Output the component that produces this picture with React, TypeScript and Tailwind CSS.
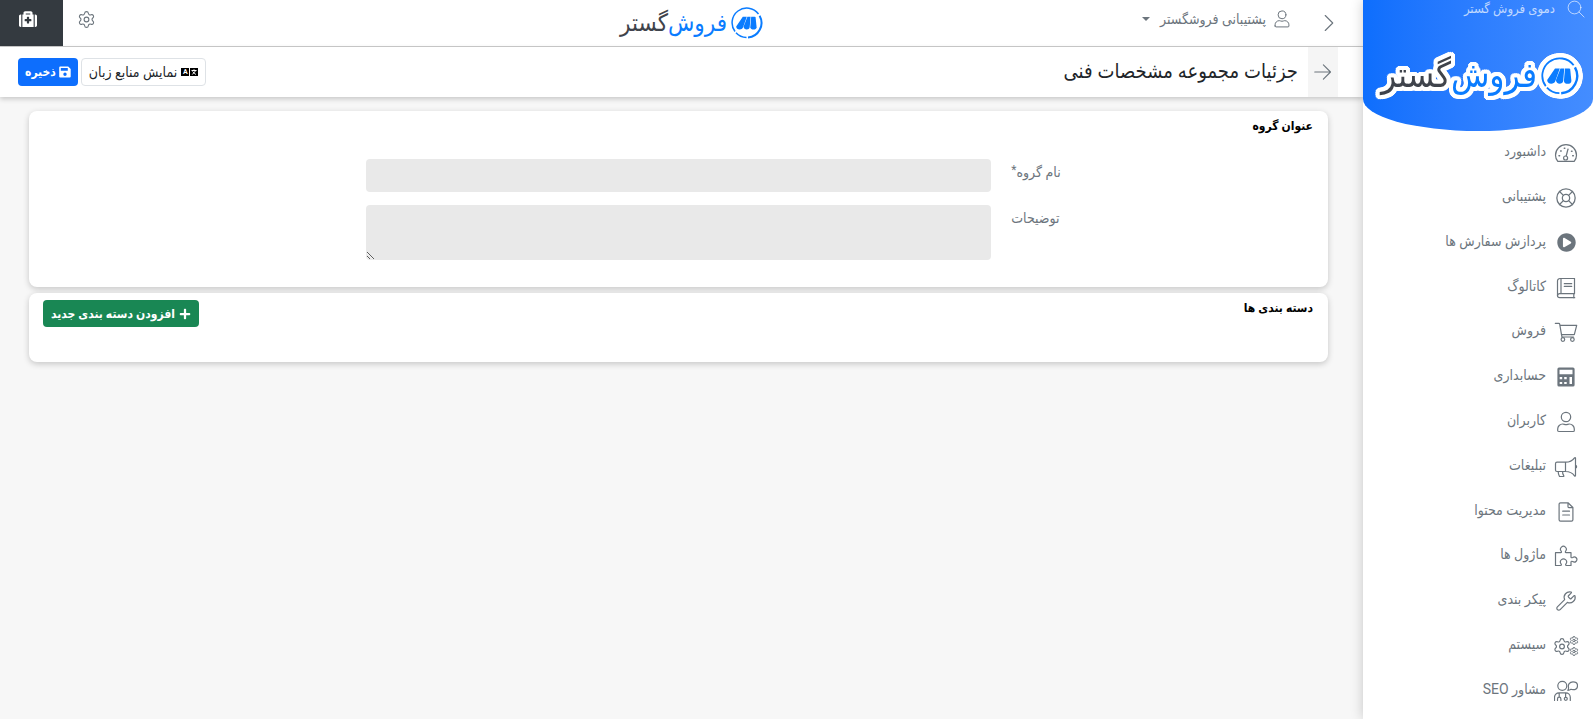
import React from "react";
import { LifeBuoy, Settings, Wrench } from "lucide-react";
import { FaMedkit, FaPlayCircle, FaPlus } from "react-icons/fa";

interface IconProps {
  className?: string;
}

interface LineIconProps extends IconProps {
  children: React.ReactNode;
}

const LineIcon: React.FC<LineIconProps> = ({ className = "size-6", children }) => (
  <svg
    viewBox="0 0 24 24"
    fill="none"
    stroke="currentColor"
    strokeWidth={1.2}
    strokeLinecap="round"
    strokeLinejoin="round"
    className={className}
    aria-hidden="true"
  >
    {children}
  </svg>
);

const GaugeIcon = () => (
  <LineIcon>
    <path d="M3.8 20.4h16.4c1.6-2 2.3-3.8 2.3-6.2a10.5 10.5 0 0 0-21 0c0 2.4.7 4.2 2.3 6.2z" />
    <circle cx="11.6" cy="17" r="2" />
    <path d="m12.2 15 1.8-7" />
    <path d="M5 14.8h.6M6.6 10h.6M10.3 7.2h.5M17.5 10.2h.5M18.700 14.800h.6" strokeWidth={1.5} />
  </LineIcon>
);

const BookIcon = () => (
  <LineIcon>
    <path d="M20.5 2.5H6A2.5 2.5 0 0 0 3.5 5v14.5A2.2 2.2 0 0 0 5.7 21.7h15" />
    <path d="M20.5 2.5v15.2H5.7a2 2 0 0 0-2.2 2M7 2.5v15.2M19.8 17.7v4M10.3 7.700h7.4M10.3 10.4h7.4" />
  </LineIcon>
);

const CartIcon = () => (
  <LineIcon>
    <path d="M1.3 3.3h3.5c.6 0 .8.3.9.9l1.8 10.500h12.8l2.4-9.400H6" />
    <path d="M7.5 14.7 8 17h11.5" />
    <circle cx="8.9" cy="19.5" r="1.8" />
    <circle cx="18.4" cy="19.5" r="1.8" />
  </LineIcon>
);

const CalculatorIcon = () => (
  <svg viewBox="0 0 24 24" fill="currentColor" fillRule="evenodd" className="size-6" aria-hidden="true">
    <path d="M5 2.5h14A1.6 1.6 0 0 1 20.6 4v16a1.6 1.6 0 0 1-1.6 1.6H5A1.6 1.6 0 0 1 3.4 20V4A1.6 1.6 0 0 1 5 2.5zM5.5 4.7v4.6h13V4.7zM5.7 12v2.2h2.500V12zM10.2 12v2.200h2.500V12zM5.7 16.900v2.200h2.500v-2.200zM10.2 16.900v2.200h2.500v-2.200zM15.5 12v7.100H18V12z" />
  </svg>
);

const UserIcon: React.FC<IconProps> = ({ className }) => (
  <LineIcon className={className}>
    <circle cx="12" cy="7" r="4.7" />
    <path d="M3.7 20.4V19a5 5 0 0 1 5-5c1.2 0 1.9.7 3.3.7s2.1-.7 3.3-.7a5 5 0 0 1 5 5v1.4a1.1 1.1 0 0 1-1.1 1.1H4.8a1.1 1.1 0 0 1-1.1-1.1z" />
  </LineIcon>
);

const BullhornIcon = () => (
  <LineIcon>
    <path d="M11.5 7.2H3A1.5 1.5 0 0 0 1.5 8.7V15A1.5 1.5 0 0 0 3 16.500h8.500zM11.5 7.2c4 0 7.2-1.8 9-4.4.4-.5 1-.4 1 .3v17.5c0 .7-.6.8-1 .3-1.8-2.6-5-4.4-9-4.4" />
    <path d="M4.2 16.5c0 1.9.5 3.5 1.3 5h3.8c.7 0 .7-.6.3-1.2a6 6 0 0 1-1-3.800M21.7 10.400c1.2.3 1.2 2.200 0 2.500" />
  </LineIcon>
);

const FileIcon = () => (
  <LineIcon>
    <path d="M14 2.8H6.5A1.4 1.4 0 0 0 5.1 4.2v15.6a1.4 1.4 0 0 0 1.4 1.4h11a1.4 1.4 0 0 0 1.4-1.4V7.5zM14 2.8v4a.8.8 0 0 0 .8.8h4M8.7 11.2h6.8M8.7 15h6.8" />
  </LineIcon>
);

const PuzzleIcon = () => (
  <LineIcon>
    <path d="M1.5 8.7h5.2c1 0 .9-.9.4-1.7a2.9 2.9 0 1 1 4.6 0c-.5.8-.6 1.7.4 1.7H17v4.2c0 1 .9 1 1.7.5a2.6 2.6 0 1 1 0 4.2c-.8-.5-1.7-.5-1.7.5v3.4h-4.5c-1.2 0-1-1-.4-1.8a3.1 3.1 0 1 0-5.2 0c.6.8.8 1.8-.4 1.8h-5z" />
  </LineIcon>
);

const CogsIcon = () => (
  <svg viewBox="0 0 24 24" className="size-6 overflow-visible" aria-hidden="true">
    <Settings x={-1.5} y={3} size={19} strokeWidth={1.5} />
    <Settings x={15} y={1.5} size={10} strokeWidth={2.4} />
    <Settings x={15} y={12.5} size={10} strokeWidth={2.4} />
  </svg>
);

const AdvisorIcon = () => (
  <LineIcon>
    <circle cx="8.3" cy="6.8" r="4.5" />
    <path d="M14.600 8.800c-.9-3.100.9-6 4.400-6 2.7 0 4.5 1.700 4.500 3.900s-1.800 4-4.500 4c-.8 0-1.400-.1-2-.4-.9.700-1.900 1-3.200 1 .5-.6.800-1.500.8-2.500z" />
    <path d="M.5 21.5v-3.200a4.500 4.500 0 0 1 4.500-4.500h6.800a4.500 4.500 0 0 1 4.500 4.500v3.200M5.200 14v4.200M11.600 14v4.200M3.500 21.500v-1.600a1.700 1.700 0 0 1 3.400 0v1.600" />
    <circle cx="11.8" cy="19.800" r="1.500" />
  </LineIcon>
);

const SaveIcon = () => (
  <svg viewBox="0 0 12 12" fill="currentColor" fillRule="evenodd" className="size-3" aria-hidden="true">
    <path d="M1.2.5h8L11.7 3v7.500a1 1 0 0 1-1 1H1.200a1 1 0 0 1-1-1v-9a1 1 0 0 1 1-1zM1.800 2v2.800h7V2zM6 6.600a1.700 1.700 0 1 0 0 3.400 1.700 1.700 0 0 0 0-3.400z" />
  </svg>
);

// two dark tiles: a latin letter and a translated glyph
const LanguageIcon = () => (
  <span className="flex gap-px" aria-hidden="true" dir="ltr">
    <span className="flex size-2 items-center justify-center bg-black text-[7px] font-bold leading-none text-white">
      A
    </span>
    <span className="flex size-2 items-center justify-center bg-black text-white">
      <svg viewBox="0 0 8 8" fill="none" stroke="currentColor" className="size-2">
        <path d="M1.500 2.500h5M4 1.300v1.200M2.300 6.500 5.700 2.700M2.500 3.500l3.400 3" />
      </svg>
    </span>
  </span>
);

interface LogoProps {
  outlined?: boolean;
}

const Emblem: React.FC<LogoProps> = ({ outlined }) => (
  <svg viewBox="0 0 32 32" className={outlined ? "size-[38px]" : "size-8"} aria-hidden="true">
    {outlined && <circle cx="16" cy="16" r="15.500" fill="#fff" />}
    <g fill="none" stroke="#0a7cff" strokeWidth="2">
      <path d="M4 24.500A14.600 14.600 0 0 1 27.500 7" strokeWidth="1.500" />
      <path d="M28.600 8.800A14.600 14.600 0 0 1 17 30.500" />
      <path d="M15.500 30.500A14.600 14.600 0 0 1 5 25.800" strokeWidth="1.500" />
    </g>
    <g fill="#0a7cff">
      <path d="M11.800 9.700h4l-3.700 10.500c-1 3.200-7 3-6.900-.8z" />
      <path d="M16.400 9.700h3.200l-.9 10.500c-.6 3.200-6.200 3-6.100-.8z" />
      <path d="M20.200 9.700h3.500c.5 0 .8.300.9.800l1 9.700c0 3.200-6.200 3.200-6.300 0z" />
    </g>
  </svg>
);

const Logo: React.FC<LogoProps> = ({ outlined }) => (
  <a
    href="#"
    className={
      outlined
        ? "flex items-center gap-1 text-[35px] leading-10 [filter:drop-shadow(2px_0_0_#fff)_drop-shadow(-2px_0_0_#fff)_drop-shadow(0_2px_0_#fff)_drop-shadow(0_-2px_0_#fff)_drop-shadow(1px_1px_0_#fff)_drop-shadow(-1px_-1px_0_#fff)_drop-shadow(1px_-1px_0_#fff)_drop-shadow(-1px_1px_0_#fff)]"
        : "flex items-center gap-1 text-2xl leading-8"
    }
  >
    <Emblem outlined={outlined} />
    <span className="flex">
      <span className="block text-[#0a7cff]">فروش</span>
      <span className="block text-[#3f434b]">گستر</span>
    </span>
  </a>
);

const menuItems = [
  { text: "داشبورد", icon: <GaugeIcon /> },
  { text: "پشتیبانی", icon: <LifeBuoy size={22} strokeWidth={1.4} /> },
  { text: "پردازش سفارش ها", icon: <FaPlayCircle size={19} /> },
  { text: "کاتالوگ", icon: <BookIcon /> },
  { text: "فروش", icon: <CartIcon /> },
  { text: "حسابداری", icon: <CalculatorIcon /> },
  { text: "کاربران", icon: <UserIcon /> },
  { text: "تبلیغات", icon: <BullhornIcon /> },
  { text: "مدیریت محتوا", icon: <FileIcon /> },
  { text: "ماژول ها", icon: <PuzzleIcon /> },
  { text: "پیکر بندی", icon: <Wrench size={22} strokeWidth={1.3} /> },
  { text: "سیستم", icon: <CogsIcon /> },
  { text: "مشاور SEO", icon: <AdvisorIcon /> },
];

const Sidebar = () => (
  <aside className="z-10 flex w-[230px] shrink-0 flex-col bg-white shadow-[0_0_12px_rgba(0,0,0,0.2)]">
    <div className="flex h-[131px] flex-col rounded-b-[50%_32px] bg-linear-to-l from-[#448dff] to-[#0d6efd]">
      <div className="flex items-center gap-3 ps-2 text-white/70">
        <LineIcon className="size-[18px]">
          <circle cx="10" cy="10" r="8.5" />
          <path d="m16.2 16.2 6.5 6.5" />
        </LineIcon>
        <input
          type="search"
          aria-label="جستجو"
          defaultValue="دموی فروش گستر"
          className="w-40 bg-transparent text-[13px] leading-[18px] outline-none"
        />
      </div>
      <div className="ps-[14px] pt-[38px]">
        <Logo outlined />
      </div>
    </div>
    <nav className="flex flex-1 flex-col pb-1.5">
      <ul className="flex flex-1 flex-col">
        {menuItems.map((item) => (
          <li key={item.text} className="flex min-h-10 flex-1">
            <a href="#" className="flex flex-1 items-center gap-2 ps-[15px]">
              <span className="flex w-6 justify-center">{item.icon}</span>
              <span className="pb-1 text-sm leading-5">{item.text}</span>
            </a>
          </li>
        ))}
      </ul>
    </nav>
  </aside>
);

const TopBar = () => (
  <header className="grid h-[47px] grid-cols-[1fr_auto_1fr] items-stretch border-b border-[#ccc] bg-white">
    <div className="flex items-center gap-7 ps-[25px]">
      <button type="button" aria-label="منو">
        <LineIcon className="size-[18px]">
          <path d="m7 2 10 10L7 22" strokeWidth={1.5} />
        </LineIcon>
      </button>
      <button type="button" className="flex items-center gap-1.5 pb-2 text-sm leading-5">
        <UserIcon className="size-5" />
        پشتیبانی فروشگستر
        <span className="ms-1 border-x-4 border-t-4 border-x-transparent border-t-current" />
      </button>
    </div>
    <div className="flex items-center pe-5">
      <Logo />
    </div>
    <div className="flex items-stretch justify-end gap-3.5">
      <button type="button" aria-label="تنظیمات" className="pb-2">
        <Settings size={19} strokeWidth={1.4} />
      </button>
      <button
        type="button"
        aria-label="پشتیبانی"
        className="flex w-[63px] items-center justify-center bg-[#343a40] ps-2 pb-2 text-white"
      >
        <FaMedkit size={18} />
      </button>
    </div>
  </header>
);

const TitleBar = () => (
  <div className="z-[1] flex h-[50px] items-center bg-white ps-[25px] pe-[18px] shadow-[0_2px_5px_rgba(0,0,0,0.2)]">
    <a
      href="#"
      aria-label="بازگشت"
      className="flex w-[30px] items-center justify-center self-stretch bg-[#f5f5f5]"
    >
      <LineIcon className="size-[18px]">
        <path d="M1 12h21M12.5 2.5 22 12l-9.5 9.5" strokeWidth={1.5} />
      </LineIcon>
    </a>
    <h1 className="flex-1 ps-2.5 pe-2 pb-0.5 text-xl leading-6 text-[#212529]">جزئیات مجموعه مشخصات فنی</h1>
    <div className="flex gap-[3px]">
      <button
        type="button"
        className="flex h-7 items-center gap-1 rounded border border-[#dee2e6] px-[7px] text-sm text-[#212529]"
      >
        <LanguageIcon />
        نمایش منابع زبان
      </button>
      <button
        type="button"
        className="flex h-7 items-center gap-[3px] rounded bg-[#0d6efd] px-[7px] text-xs font-bold text-white"
      >
        <SaveIcon />
        ذخیره
      </button>
    </div>
  </div>
);

const App: React.FC = () => {
  return (
    <div
      dir="rtl"
      className="flex min-h-screen bg-[#f7f7f7] font-[Roboto,'DejaVu_Sans_Condensed','DejaVu_Sans',sans-serif] text-[#6c757d]"
    >
      <Sidebar />
      <div className="flex min-w-0 flex-1 flex-col">
        <TopBar />
        <TitleBar />
        <main className="flex flex-col gap-1.5 ps-[35px] pe-[29px] pt-3.5">
          <section className="rounded-lg bg-white pb-[27px] shadow-[0_2px_6px_rgba(0,0,0,0.2)]">
            <h2 className="px-[15px] pt-[5px] text-xs leading-5 font-bold text-black">عنوان گروه</h2>
            <form className="grid grid-cols-4 gap-y-[13px] pt-[23px]">
              <label htmlFor="group-name" className="pe-2 pt-[3px] text-end text-sm leading-5">
                نام گروه<span className="align-top text-xs leading-4">*</span>
              </label>
              <div className="col-span-2 px-3">
                <input
                  id="group-name"
                  type="text"
                  className="block h-[33px] w-full rounded bg-[#e9e9e9] px-3 text-sm"
                />
              </div>
              <label htmlFor="group-description" className="col-start-1 pe-2 pt-[3px] text-end text-sm leading-5">
                توضیحات
              </label>
              <div className="col-span-2 px-3">
                <textarea
                  id="group-description"
                  className="block h-[55px] w-full resize-y rounded bg-[#e9e9e9] px-3 text-sm"
                />
              </div>
            </form>
          </section>
          <section className="flex items-start justify-between rounded-lg bg-white ps-[15px] pe-3.5 pt-[5px] pb-[35px] shadow-[0_2px_6px_rgba(0,0,0,0.2)]">
            <h2 className="text-xs leading-5 font-bold text-black">دسته بندی ها</h2>
            <button
              type="button"
              className="mt-0.5 flex h-[27px] items-center gap-1 rounded bg-[#198754] px-2 text-xs font-bold text-white"
            >
              <FaPlus size={12} />
              افزودن دسته بندی جدید
            </button>
          </section>
        </main>
      </div>
    </div>
  );
};

export default App;
